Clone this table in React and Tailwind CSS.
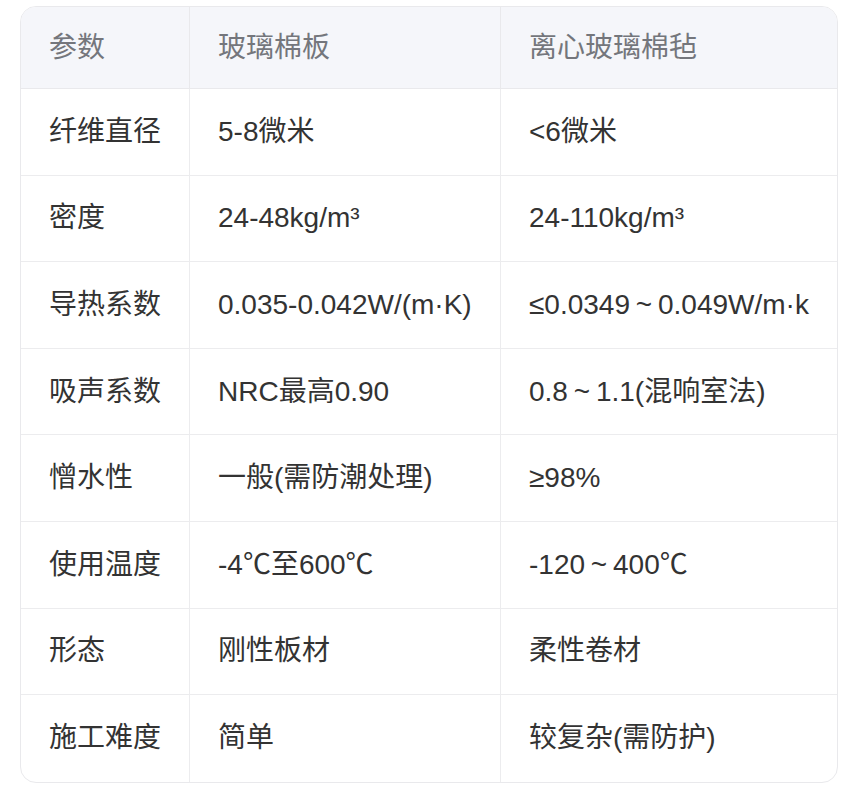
import React from "react";

// fullwidth tilde drawn as a narrow "~" centred in a 1em box
const T = () => <span className="inline-block w-[1em] text-center">~</span>;

const rows = [
  ["纤维直径", "5-8微米", "<6微米"],
  ["密度", "24-48kg/m³", "24-110kg/m³"],
  ["导热系数", "0.035-0.042W/(m·K)", <>≤0.0349<T />0.049W/m·k</>],
  ["吸声系数", "NRC最高0.90", <>0.8<T />1.1(混响室法)</>],
  ["憎水性", "一般(需防潮处理)", "≥98%"],
  ["使用温度", "-4℃至600℃", <>-120<T />400℃</>],
  ["形态", "刚性板材", "柔性卷材"],
  ["施工难度", "简单", "较复杂(需防护)"],
];

const App = () => {
  return (
    <div
      className="min-h-screen bg-white pt-[6px] pl-[20px]"
      style={{ fontFamily: '"Liberation Sans", "Noto Sans CJK SC", sans-serif' }}
    >
      <div className="w-[818px] rounded-[16px] border border-[#e9e9ec] overflow-hidden text-[28px]">
        {/* Header */}
        <div className="grid grid-cols-[169px_311px_1fr] h-[82px] bg-[#f5f6fa] text-[#74767c] border-b border-[#e9e9ec]">
          <div className="flex items-center pl-[28px] pt-[1px] border-r border-[#e9e9ec]">参数</div>
          <div className="flex items-center pl-[28px] pt-[1px] border-r border-[#e9e9ec]">玻璃棉板</div>
          <div className="flex items-center pl-[28px] pt-[1px]">离心玻璃棉毡</div>
        </div>

        {/* Body */}
        {rows.map((r, i) => (
          <div
            key={i}
            className={`grid grid-cols-[169px_311px_1fr] h-[86.6px] text-[#333333] ${
              i < rows.length - 1 ? "border-b border-[#ececee]" : ""
            }`}
          >
            <div className="flex items-center pl-[28px] border-r border-[#ececee]">{r[0]}</div>
            <div className="flex items-center pl-[28px] border-r border-[#ececee] whitespace-nowrap">{r[1]}</div>
            <div className="flex items-center pl-[28px] whitespace-nowrap">{r[2]}</div>
          </div>
        ))}
      </div>
    </div>
  );
};

export default App;
